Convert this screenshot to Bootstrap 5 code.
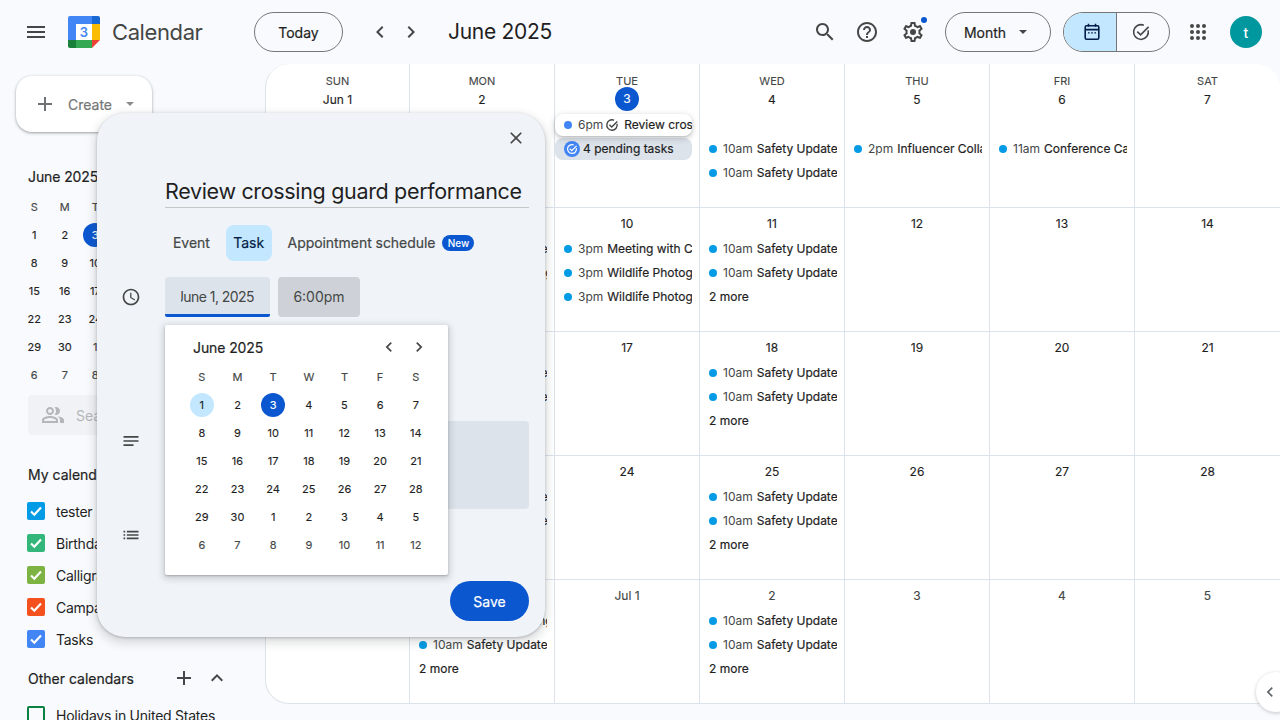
<!DOCTYPE html>
<html lang="en">
<head>
<meta charset="utf-8">
<title>Calendar</title>
<link href="https://cdn.jsdelivr.net/npm/bootstrap@5.3.0/dist/css/bootstrap.min.css" rel="stylesheet">
<style>
html,body{height:720px;overflow:hidden}
body{background:#f8fafd;font-family:Inter,"Noto Sans",sans-serif;color:#1f1f1f;font-size:14px}
svg{display:block;flex:none}
.app-shell{width:1280px;height:720px;position:relative;overflow:hidden}
.top-bar{height:64px}
.burger{margin-left:24px;width:24px;height:24px;fill:#444746}
.logo-mark{margin-left:20px}
.brand-name{margin-left:12px;width:142px;font-size:22px;color:#444746;line-height:28px;letter-spacing:-.4px}
.pill-btn{height:40px;border:1px solid #747775;border-radius:20px;background:transparent;color:#1f1f1f;font-size:14px;font-weight:400;-webkit-text-stroke:.2px;padding:0;display:flex;align-items:center;justify-content:center}
.today-btn{width:89px}
.nav-arrows{margin-left:25px;width:63px;gap:7px}
.nav-arrows svg{width:24px;height:24px;fill:#444746}
.period-name{margin-left:17px;font-size:21px;line-height:28px;letter-spacing:-.3px;width:365px;color:#1f1f1f}
.top-ico{width:24px;height:24px;fill:#444746}
.ico-help{margin-left:18px}
.gear-wrap{margin-left:22px;position:relative}
.gear-dot{position:absolute;left:20px;top:-3px;width:6px;height:6px;border-radius:50%;background:#0b57d0}
.month-btn{width:106px;margin-left:20px;gap:13px;padding-right:5px}
.caret-tri{width:0;height:0;border-left:4px solid transparent;border-right:4px solid transparent;border-top:4px solid #444746}
.seg-wrap{margin-left:12px;width:107px;height:40px;border:1px solid #747775;border-radius:20px;overflow:hidden}
.seg-on{width:53px;background:#c2e7ff;border-right:1px solid #747775;padding-left:4px}
.seg-off{flex:1;padding-right:4px}
.apps-ico{margin-left:16px}
.user-dot{margin-left:20px;width:32px;height:32px;border-radius:50%;background:#00979e;color:#fff;font-size:14px;font-weight:500}
.side-col{width:265px;flex:none;height:656px;overflow:hidden}
.create-btn{margin:12px 0 0 16px;width:136px;height:56px;border-radius:16px;background:#fff;box-shadow:0 1px 3px 1px rgba(60,64,67,.15),0 1px 2px rgba(60,64,67,.3);color:#747775;font-weight:400;font-size:14px;-webkit-text-stroke:.2px;padding:0 0 0 16px}
.create-btn svg{width:24px;height:24px;fill:#6f7275}
.create-lbl{margin-left:11px}
.create-tri{margin-left:14px;border-top-color:#8a8d8f}
.mini-title{margin:35px 0 0 28px;font-size:14px;font-weight:400;-webkit-text-stroke:.2px;line-height:20px;letter-spacing:-.1px}
.mini-grid{margin:6px 0 0 19px;display:grid;grid-template-columns:repeat(7,30.5px);grid-auto-rows:28px;text-align:center;font-size:11px;font-weight:400;-webkit-text-stroke:.15px;line-height:28px}
.mini-grid .wk{color:#444746}
.mini-grid .dim{color:#444746}
.day-now{position:relative;z-index:0;color:#fff}
.day-now::before{content:"";position:absolute;z-index:-1;left:50%;top:2px;width:24px;height:24px;margin-left:-12px;border-radius:50%;background:#0b57d0}
.people-box{margin:6px 0 0 28px;width:220px;height:40px;border-radius:4px;background:#f0f2f5;color:#b4b7ba;padding-left:13px;gap:11px}
.people-box svg{width:24px;height:24px;fill:#b4b7ba}
.group-title{margin:30px 0 0 28px;font-weight:400;-webkit-text-stroke:.2px;line-height:20px;color:#1f1f1f}
.cal-list{margin-top:10px}
.cal-row{height:32px;padding-left:27px;gap:11px;color:#1f1f1f;letter-spacing:-.25px;white-space:nowrap}
.tick-box{width:18px;height:18px;border-radius:2px;flex:none}
.tick-box svg{width:18px;height:18px;fill:none;stroke:#fff;stroke-width:2.2}
.c-tester{background:#039be5}.c-birth{background:#33b679}.c-calli{background:#7cb342}.c-camp{background:#f4511e}.c-tasks{background:#4285f4}
.c-hol{border:2px solid #0b8043}
.other-head{margin:13px 0 11px 28px;height:20px;width:201px}
.other-head svg{width:24px;height:24px;fill:#444746}
.other-head .txt{font-weight:400;-webkit-text-stroke:.2px;flex:1}
.other-head .add{margin-right:9px}
.month-wrap{flex:1;height:640px;background:#fff;border-radius:24px 24px 0 24px;border:1px solid #dde3ea;border-width:0 0 1px 1px;display:grid;grid-template-columns:144px repeat(6,145px);grid-template-rows:144px repeat(4,124px);overflow:hidden}
.cell{border-right:1px solid #dde3ea;border-bottom:1px solid #dde3ea;position:relative;min-width:0}
.cell.last-col{border-right:0}
.cell.last-row{border-bottom:0}
.cell-head{text-align:center;padding-top:8px}
.wk-name{font-size:11px;font-weight:400;-webkit-text-stroke:.1px;line-height:18px;color:#444746}
.dnum{font-size:12px;font-weight:400;-webkit-text-stroke:.15px;line-height:20px;color:#1f1f1f;text-align:center}
.dnum.soft{color:#444746}
.cell-date{padding-top:6px}
.slot-list{margin-top:3px}
.head-list{margin-top:27px}
.chip-list{margin-top:3px}
.today-num{width:24px;height:24px;margin:-3px auto 0;border-radius:50%;background:#0b57d0;color:#fff;line-height:24px}
.ev{width:137px;height:24px;padding-left:9px;font-size:12px;line-height:24px;overflow:hidden;white-space:nowrap;border-radius:8px;text-align:left}
.ev-dot{width:8px;height:8px;border-radius:50%;background:#039be5;flex:none;margin-right:6px}
.ev-time{color:#444746;margin-right:4px}
.ev-name{font-weight:400;-webkit-text-stroke:.2px;color:#1f1f1f}
.more-row{font-weight:400;-webkit-text-stroke:.2px;color:#1f1f1f}
.ev-lift{height:22px;margin:1px 0 2px;background:#fff;box-shadow:0 2px 6px rgba(60,64,67,.3),0 1px 2px rgba(60,64,67,.15);position:relative;z-index:1}
.ev-lift .ev-dot{background:#4285f4}
.ev-lift .ev-time{margin-right:2px}
.ev-lift svg{margin-right:5px}
.ev-pend{height:22px;background:#dde3ea;font-weight:400;-webkit-text-stroke:.2px;color:#1f1f1f}
.pend-ico{width:16px;height:16px;border-radius:50%;background:#4285f4;margin-right:3px}
.slide-tab{position:absolute;left:1256px;top:672px;width:40px;height:40px;border-radius:50%;background:#fff;box-shadow:0 1px 3px 1px rgba(60,64,67,.18);padding-left:4px}
.slide-tab svg{width:20px;height:20px;fill:#5f6368}
.pop-card{position:absolute;left:97px;top:113px;width:448px;height:524px;background:#f0f4f9;border-radius:28px;box-shadow:0 4px 8px 3px rgba(60,64,67,.15),0 1px 3px rgba(60,64,67,.3);z-index:5}
.pop-top{height:64px;padding:15px 19px 0 0}
.pop-top svg{width:20px;height:20px;fill:#444746}
.pop-line{padding-right:16px}
.pop-gut{width:68px;flex:none}
.pop-gut svg{width:20px;height:20px;fill:#444746}
.pop-main{flex:1;min-width:0}
.title-field{height:31px;border-bottom:1px solid #c4c7c5;font-size:21.5px;line-height:28px;color:#1f1f1f;white-space:nowrap;letter-spacing:-.33px}
.type-tabs{margin-top:17px;height:36px}
.type-tab{height:36px;padding:0 8px;border-radius:8px;font-weight:400;-webkit-text-stroke:.2px;color:#444746;line-height:36px;letter-spacing:-.05px}
.type-tab.type-on{background:#c2e7ff;color:#041e49;margin:0 8px;padding:0 7.5px}
.new-tag{height:16px;width:32px;margin-left:-1px;border-radius:8px;background:#0b57d0;color:#fff;font-size:10px;font-weight:500;line-height:16px;text-align:center}
.when-line{margin-top:16px}
.date-field{width:105px;height:40px;background:#dde3ea;border-bottom:3px solid #0b57d0;padding:0 16px;line-height:39px;color:#444746;margin-right:8px;border-radius:4px 4px 2px 2px;letter-spacing:-.55px}
.date-clip{overflow:hidden;white-space:nowrap;justify-content:flex-end}
.time-field{width:82px;height:40px;background:#ced2d8;border-radius:4px;text-align:center;line-height:40px;color:#444746}
.desc-line{margin-top:104px}
.desc-gut{padding-top:10px}
.desc-box{height:88px;background:#dde3ea;border-radius:4px}
.list-line{margin-top:14px;height:24px}
.pop-actions{margin-top:34px;padding-right:16px}
.save-btn{width:79px;height:40px;border-radius:20px;background:#0b57d0;color:#fff;font-size:14px;font-weight:400;-webkit-text-stroke:.2px;padding:0;border:0}
.save-btn:hover{background:#0b57d0;color:#fff}
.picker-card{position:absolute;left:68px;top:212px;width:283px;height:250px;background:#fff;border-radius:2px;box-shadow:0 2px 6px 2px rgba(60,64,67,.2),0 1px 2px rgba(60,64,67,.3);z-index:6}
.picker-head{height:38px;padding:6px 19px 0 28px}
.picker-name{flex:1;font-weight:400;-webkit-text-stroke:.2px;font-size:14px;letter-spacing:-.1px;color:#1f1f1f}
.picker-head svg{width:20px;height:20px;fill:#444746}
.picker-head .gap-arrow{margin-right:10px}
.picker-grid{margin-left:19px;display:grid;grid-template-columns:repeat(7,35.67px);grid-auto-rows:28px;text-align:center;font-size:11px;font-weight:400;-webkit-text-stroke:.15px;line-height:28px;color:#1f1f1f}
.picker-grid .wk,.picker-grid .dim{color:#444746}
.day-pick{position:relative;z-index:0}
.day-pick::before{content:"";position:absolute;z-index:-1;left:50%;top:2px;width:24px;height:24px;margin-left:-12px;border-radius:50%;background:#c2e7ff}
</style>
</head>
<body>
<div class="app-shell">
  <header class="top-bar d-flex align-items-center">
    <svg class="burger" viewBox="0 0 24 24"><path d="M3 18h18v-2H3v2zm0-5h18v-2H3v2zm0-7v2h18V6H3z"/></svg>
    <svg class="logo-mark" width="32" height="32" viewBox="0 0 32 32">
      <path d="M2 0h22v8H8v16H0V2a2 2 0 0 1 2-2z" fill="#4285f4"/>
      <path d="M24 0h6a2 2 0 0 1 2 2v6h-8z" fill="#1967d2"/>
      <rect x="24" y="8" width="8" height="16" fill="#fbbc04"/>
      <rect x="8" y="24" width="16" height="8" fill="#34a853"/>
      <path d="M0 24h8v8H2a2 2 0 0 1-2-2z" fill="#188038"/>
      <path d="M24 24h8l-8 8z" fill="#ea4335"/>
      <rect x="8" y="8" width="16" height="16" fill="#fff"/>
      <text x="16" y="21" text-anchor="middle" font-family="Inter,sans-serif" font-size="13" font-weight="600" fill="#4285f4">3</text>
    </svg>
    <div class="brand-name">Calendar</div>
    <button class="btn pill-btn today-btn">Today</button>
    <div class="nav-arrows d-flex">
      <svg viewBox="0 0 24 24"><path d="M15.41 7.41 14 6l-6 6 6 6 1.41-1.41L10.83 12z"/></svg>
      <svg viewBox="0 0 24 24"><path d="M10 6 8.59 7.41 13.17 12l-4.58 4.59L10 18l6-6z"/></svg>
    </div>
    <div class="period-name">June 2025</div>
    <svg class="top-ico" viewBox="0 0 24 24"><path d="M15.5 14h-.79l-.28-.27C15.41 12.59 16 11.11 16 9.5 16 5.91 13.09 3 9.5 3S3 5.91 3 9.5 5.91 16 9.5 16c1.61 0 3.09-.59 4.23-1.57l.27.28v.79l5 4.99L20.49 19l-4.99-5zm-6 0C7.01 14 5 11.99 5 9.5S7.01 5 9.5 5 14 7.01 14 9.5 11.99 14 9.5 14z"/></svg>
    <svg class="top-ico ico-help" viewBox="0 0 24 24"><path d="M11 18h2v-2h-2v2zm1-16C6.48 2 2 6.48 2 12s4.48 10 10 10 10-4.48 10-10S17.52 2 12 2zm0 18c-4.41 0-8-3.59-8-8s3.59-8 8-8 8 3.59 8 8-3.59 8-8 8zm0-14c-2.21 0-4 1.79-4 4h2c0-1.1.9-2 2-2s2 .9 2 2c0 2-3 1.75-3 5h2c0-2.25 3-2.5 3-5 0-2.21-1.79-4-4-4z"/></svg>
    <div class="gear-wrap">
      <svg class="top-ico" viewBox="0 0 24 24"><path d="M19.43 12.98c.04-.32.07-.64.07-.98 0-.34-.03-.66-.07-.98l2.11-1.65c.19-.15.24-.42.12-.64l-2-3.46c-.09-.16-.26-.25-.44-.25-.06 0-.12.01-.17.03l-2.49 1c-.52-.4-1.08-.73-1.69-.98l-.38-2.65C14.46 2.18 14.25 2 14 2h-4c-.25 0-.46.18-.49.42l-.38 2.65c-.61.25-1.17.59-1.69.98l-2.49-1c-.06-.02-.12-.03-.18-.03-.17 0-.34.09-.43.25l-2 3.46c-.13.22-.07.49.12.64l2.11 1.65c-.04.32-.07.65-.07.98 0 .33.03.66.07.98l-2.11 1.65c-.19.15-.24.42-.12.64l2 3.46c.09.16.26.25.44.25.06 0 .12-.01.17-.03l2.49-1c.52.4 1.08.73 1.69.98l.38 2.65c.03.24.24.42.49.42h4c.25 0 .46-.18.49-.42l.38-2.65c.61-.25 1.17-.59 1.69-.98l2.49 1c.06.02.12.03.18.03.17 0 .34-.09.43-.25l2-3.46c.12-.22.07-.49-.12-.64l-2.11-1.65zm-1.98-1.71c.04.31.05.52.05.73 0 .21-.02.43-.05.73l-.14 1.13.89.7 1.08.84-.7 1.21-1.27-.51-1.04-.42-.9.68c-.43.32-.84.56-1.25.73l-1.06.43-.16 1.13-.2 1.35h-1.4l-.19-1.35-.16-1.13-1.06-.43c-.43-.18-.83-.41-1.23-.71l-.91-.7-1.06.43-1.27.51-.7-1.21 1.08-.84.89-.7-.14-1.13c-.03-.31-.05-.54-.05-.74s.02-.43.05-.73l.14-1.13-.89-.7-1.08-.84.7-1.21 1.27.51 1.04.42.9-.68c.43-.32.84-.56 1.25-.73l1.06-.43.16-1.13.2-1.35h1.39l.19 1.35.16 1.13 1.06.43c.43.18.83.41 1.23.71l.91.7 1.06-.43 1.27-.51.7 1.21-1.07.85-.89.7.14 1.13zM12 9a3 3 0 1 0 0 6 3 3 0 0 0 0-6z"/></svg>
      <span class="gear-dot"></span>
    </div>
    <button class="btn pill-btn month-btn">Month <span class="caret-tri"></span></button>
    <div class="seg-wrap d-flex">
      <div class="seg-on d-flex align-items-center justify-content-center">
        <svg width="20" height="20" viewBox="0 0 20 20" fill="none" stroke="#041e49" stroke-width="1.6"><rect x="3.2" y="3.8" width="13.6" height="13.4" rx="1.4"/><path d="M3.2 7.6h13.6M6.5 1.8v3M13.5 1.8v3"/><path d="M6 10.8h1.6M9.2 10.8h1.6M12.4 10.8H14" stroke-width="1.2"/></svg>
      </div>
      <div class="seg-off d-flex align-items-center justify-content-center">
        <svg width="20" height="20" viewBox="0 0 20 20" fill="none" stroke="#444746" stroke-width="1.6"><path d="M17.2 8.4A7.4 7.4 0 1 1 12.8 3.2"/><path d="M6.3 9.6l3.3 3.3 8-8"/></svg>
      </div>
    </div>
    <svg class="apps-ico" width="24" height="24" viewBox="0 0 24 24" fill="#444746"><circle cx="6" cy="6" r="2"/><circle cx="12" cy="6" r="2"/><circle cx="18" cy="6" r="2"/><circle cx="6" cy="12" r="2"/><circle cx="12" cy="12" r="2"/><circle cx="18" cy="12" r="2"/><circle cx="6" cy="18" r="2"/><circle cx="12" cy="18" r="2"/><circle cx="18" cy="18" r="2"/></svg>
    <div class="user-dot d-flex align-items-center justify-content-center">t</div>
  </header>

  <div class="d-flex">
    <aside class="side-col">
      <button class="btn create-btn d-flex align-items-center">
        <svg viewBox="0 0 24 24"><path d="M19 13h-6v6h-2v-6H5v-2h6V5h2v6h6v2z"/></svg>
        <span class="create-lbl">Create</span><span class="caret-tri create-tri"></span>
      </button>
      <div class="mini-title">June 2025</div>
      <div class="mini-grid">
        <div class="wk">S</div><div class="wk">M</div><div class="wk">T</div><div class="wk">W</div><div class="wk">T</div><div class="wk">F</div><div class="wk">S</div>
        <div>1</div><div>2</div><div class="day-now">3</div><div>4</div><div>5</div><div>6</div><div>7</div>
        <div>8</div><div>9</div><div>10</div><div>11</div><div>12</div><div>13</div><div>14</div>
        <div>15</div><div>16</div><div>17</div><div>18</div><div>19</div><div>20</div><div>21</div>
        <div>22</div><div>23</div><div>24</div><div>25</div><div>26</div><div>27</div><div>28</div>
        <div>29</div><div>30</div><div class="dim">1</div><div class="dim">2</div><div class="dim">3</div><div class="dim">4</div><div class="dim">5</div>
        <div class="dim">6</div><div class="dim">7</div><div class="dim">8</div><div class="dim">9</div><div class="dim">10</div><div class="dim">11</div><div class="dim">12</div>
      </div>
      <div class="people-box d-flex align-items-center">
        <svg viewBox="0 0 24 24"><path d="M16.67 13.13C18.04 14.06 19 15.32 19 17v3h4v-3c0-2.18-3.57-3.47-6.33-3.87zM15 12c2.21 0 4-1.79 4-4s-1.79-4-4-4c-.47 0-.91.1-1.33.24C14.5 5.27 15 6.58 15 8s-.5 2.73-1.33 3.76c.42.14.86.24 1.33.24zM9 12c2.21 0 4-1.79 4-4s-1.79-4-4-4-4 1.79-4 4 1.79 4 4 4zm0-6c1.1 0 2 .9 2 2s-.9 2-2 2-2-.9-2-2 .9-2 2-2zM9 13c-2.67 0-8 1.34-8 4v3h16v-3c0-2.66-5.33-4-8-4zm6 5H3v-.99C3.2 16.29 6.3 15 9 15s5.8 1.29 6 2z"/></svg>
        <span>Search for people</span>
      </div>
      <div class="group-title">My calendars</div>
      <div class="cal-list">
        <div class="cal-row d-flex align-items-center"><span class="tick-box c-tester"><svg viewBox="0 0 18 18"><path d="M4 9.5l3.3 3.2L14 5.5"/></svg></span>tester</div>
        <div class="cal-row d-flex align-items-center"><span class="tick-box c-birth"><svg viewBox="0 0 18 18"><path d="M4 9.5l3.3 3.2L14 5.5"/></svg></span>Birthdays</div>
        <div class="cal-row d-flex align-items-center"><span class="tick-box c-calli"><svg viewBox="0 0 18 18"><path d="M4 9.5l3.3 3.2L14 5.5"/></svg></span>Calligraphy</div>
        <div class="cal-row d-flex align-items-center"><span class="tick-box c-camp"><svg viewBox="0 0 18 18"><path d="M4 9.5l3.3 3.2L14 5.5"/></svg></span>Campaign</div>
        <div class="cal-row d-flex align-items-center"><span class="tick-box c-tasks"><svg viewBox="0 0 18 18"><path d="M4 9.5l3.3 3.2L14 5.5"/></svg></span>Tasks</div>
      </div>
      <div class="other-head d-flex align-items-center">
        <span class="txt">Other calendars</span>
        <svg class="add" viewBox="0 0 24 24"><path d="M19 13h-6v6h-2v-6H5v-2h6V5h2v6h6v2z"/></svg>
        <svg viewBox="0 0 24 24"><path d="M12 8l-6 6 1.41 1.41L12 10.83l4.59 4.58L18 14z"/></svg>
      </div>
      <div class="cal-row d-flex align-items-center"><span class="tick-box c-hol"></span>Holidays in United States</div>
    </aside>

    <main class="month-wrap">
      <div class="cell cell-head"><div class="wk-name">SUN</div><div class="dnum">Jun 1</div></div>
      <div class="cell cell-head"><div class="wk-name">MON</div><div class="dnum">2</div></div>
      <div class="cell cell-head"><div class="wk-name">TUE</div><div class="dnum today-num">3</div>
        <div class="chip-list">
          <div class="ev ev-lift d-flex align-items-center"><span class="ev-dot"></span><span class="ev-time">6pm</span><svg width="14" height="14" viewBox="0 0 20 20" fill="none" stroke="#444746" stroke-width="2"><path d="M17.2 8.4A7.4 7.4 0 1 1 12.8 3.2"/><path d="M6.3 9.6l3.3 3.3 8-8"/></svg><span class="ev-name">Review crossing guard performance</span></div>
          <div class="ev ev-pend d-flex align-items-center"><span class="pend-ico d-flex align-items-center justify-content-center"><svg width="12" height="12" viewBox="0 0 20 20" fill="none" stroke="#fff" stroke-width="2"><path d="M17.2 8.4A7.4 7.4 0 1 1 12.8 3.2"/><path d="M6.3 9.6l3.3 3.3 8-8"/></svg></span>4 pending tasks</div>
        </div>
      </div>
      <div class="cell cell-head"><div class="wk-name">WED</div><div class="dnum">4</div>
        <div class="head-list">
          <div class="ev d-flex align-items-center"><span class="ev-dot"></span><span class="ev-time">10am</span><span class="ev-name">Safety Update</span></div>
          <div class="ev d-flex align-items-center"><span class="ev-dot"></span><span class="ev-time">10am</span><span class="ev-name">Safety Update</span></div>
        </div>
      </div>
      <div class="cell cell-head"><div class="wk-name">THU</div><div class="dnum">5</div>
        <div class="head-list">
          <div class="ev d-flex align-items-center"><span class="ev-dot"></span><span class="ev-time">2pm</span><span class="ev-name">Influencer Collab</span></div>
        </div>
      </div>
      <div class="cell cell-head"><div class="wk-name">FRI</div><div class="dnum">6</div>
        <div class="head-list">
          <div class="ev d-flex align-items-center"><span class="ev-dot"></span><span class="ev-time">11am</span><span class="ev-name">Conference Call</span></div>
        </div>
      </div>
      <div class="cell cell-head last-col"><div class="wk-name">SAT</div><div class="dnum">7</div></div>

      <div class="cell cell-date"><div class="dnum">8</div></div>
      <div class="cell cell-date"><div class="dnum">9</div><div class="slot-list">
        <div class="ev d-flex align-items-center"><span class="ev-dot"></span><span class="ev-time">10am</span><span class="ev-name">Safety Update</span></div>
        <div class="ev d-flex align-items-center"><span class="ev-dot"></span><span class="ev-time">10am</span><span class="ev-name">Safety Meeting</span></div>
      </div></div>
      <div class="cell cell-date"><div class="dnum">10</div><div class="slot-list">
        <div class="ev d-flex align-items-center"><span class="ev-dot"></span><span class="ev-time">3pm</span><span class="ev-name">Meeting with Client</span></div>
        <div class="ev d-flex align-items-center"><span class="ev-dot"></span><span class="ev-time">3pm</span><span class="ev-name">Wildlife Photography</span></div>
        <div class="ev d-flex align-items-center"><span class="ev-dot"></span><span class="ev-time">3pm</span><span class="ev-name">Wildlife Photography</span></div>
      </div></div>
      <div class="cell cell-date"><div class="dnum">11</div><div class="slot-list">
        <div class="ev d-flex align-items-center"><span class="ev-dot"></span><span class="ev-time">10am</span><span class="ev-name">Safety Update</span></div>
        <div class="ev d-flex align-items-center"><span class="ev-dot"></span><span class="ev-time">10am</span><span class="ev-name">Safety Update</span></div>
        <div class="ev more-row">2 more</div>
      </div></div>
      <div class="cell cell-date"><div class="dnum">12</div></div>
      <div class="cell cell-date"><div class="dnum">13</div></div>
      <div class="cell cell-date last-col"><div class="dnum">14</div></div>

      <div class="cell cell-date"><div class="dnum">15</div></div>
      <div class="cell cell-date"><div class="dnum">16</div><div class="slot-list">
        <div class="ev d-flex align-items-center"><span class="ev-dot"></span><span class="ev-time">10am</span><span class="ev-name">Safety Update</span></div>
        <div class="ev d-flex align-items-center"><span class="ev-dot"></span><span class="ev-time">10am</span><span class="ev-name">Safety Update</span></div>
      </div></div>
      <div class="cell cell-date"><div class="dnum">17</div></div>
      <div class="cell cell-date"><div class="dnum">18</div><div class="slot-list">
        <div class="ev d-flex align-items-center"><span class="ev-dot"></span><span class="ev-time">10am</span><span class="ev-name">Safety Update</span></div>
        <div class="ev d-flex align-items-center"><span class="ev-dot"></span><span class="ev-time">10am</span><span class="ev-name">Safety Update</span></div>
        <div class="ev more-row">2 more</div>
      </div></div>
      <div class="cell cell-date"><div class="dnum">19</div></div>
      <div class="cell cell-date"><div class="dnum">20</div></div>
      <div class="cell cell-date last-col"><div class="dnum">21</div></div>

      <div class="cell cell-date"><div class="dnum">22</div></div>
      <div class="cell cell-date"><div class="dnum">23</div><div class="slot-list">
        <div class="ev d-flex align-items-center"><span class="ev-dot"></span><span class="ev-time">10am</span><span class="ev-name">Safety Update</span></div>
        <div class="ev d-flex align-items-center"><span class="ev-dot"></span><span class="ev-time">10am</span><span class="ev-name">Safety Update</span></div>
      </div></div>
      <div class="cell cell-date"><div class="dnum">24</div></div>
      <div class="cell cell-date"><div class="dnum">25</div><div class="slot-list">
        <div class="ev d-flex align-items-center"><span class="ev-dot"></span><span class="ev-time">10am</span><span class="ev-name">Safety Update</span></div>
        <div class="ev d-flex align-items-center"><span class="ev-dot"></span><span class="ev-time">10am</span><span class="ev-name">Safety Update</span></div>
        <div class="ev more-row">2 more</div>
      </div></div>
      <div class="cell cell-date"><div class="dnum">26</div></div>
      <div class="cell cell-date"><div class="dnum">27</div></div>
      <div class="cell cell-date last-col"><div class="dnum">28</div></div>

      <div class="cell cell-date last-row"><div class="dnum">29</div></div>
      <div class="cell cell-date last-row"><div class="dnum">30</div><div class="slot-list">
        <div class="ev d-flex align-items-center"><span class="ev-dot"></span><span class="ev-time">10am</span><span class="ev-name">Safety Meeting</span></div>
        <div class="ev d-flex align-items-center"><span class="ev-dot"></span><span class="ev-time">10am</span><span class="ev-name">Safety Update</span></div>
        <div class="ev more-row">2 more</div>
      </div></div>
      <div class="cell cell-date last-row"><div class="dnum soft">Jul 1</div></div>
      <div class="cell cell-date last-row"><div class="dnum soft">2</div><div class="slot-list">
        <div class="ev d-flex align-items-center"><span class="ev-dot"></span><span class="ev-time">10am</span><span class="ev-name">Safety Update</span></div>
        <div class="ev d-flex align-items-center"><span class="ev-dot"></span><span class="ev-time">10am</span><span class="ev-name">Safety Update</span></div>
        <div class="ev more-row">2 more</div>
      </div></div>
      <div class="cell cell-date last-row"><div class="dnum soft">3</div></div>
      <div class="cell cell-date last-row"><div class="dnum soft">4</div></div>
      <div class="cell cell-date last-row last-col"><div class="dnum soft">5</div></div>
    </main>
  </div>

  <div class="slide-tab d-flex align-items-center"><svg viewBox="0 0 24 24"><path d="M15.41 7.41 14 6l-6 6 6 6 1.41-1.41L10.83 12z"/></svg></div>

  <section class="pop-card">
    <div class="pop-top d-flex justify-content-end">
      <svg viewBox="0 0 24 24"><path d="M19 6.41 17.59 5 12 10.59 6.41 5 5 6.41 10.59 12 5 17.59 6.41 19 12 13.41 17.59 19 19 17.59 13.41 12z"/></svg>
    </div>
    <div class="pop-line d-flex"><div class="pop-gut"></div><div class="pop-main title-field">Review crossing guard performance</div></div>
    <div class="pop-line d-flex"><div class="pop-gut"></div><div class="pop-main type-tabs d-flex align-items-center">
      <div class="type-tab">Event</div><div class="type-tab type-on">Task</div><div class="type-tab">Appointment schedule</div><div class="new-tag">New</div>
    </div></div>
    <div class="pop-line when-line d-flex">
      <div class="pop-gut d-flex align-items-center justify-content-center"><svg viewBox="0 0 24 24"><path d="M11.99 2C6.47 2 2 6.48 2 12s4.47 10 9.99 10C17.52 22 22 17.52 22 12S17.52 2 11.99 2zM12 20c-4.42 0-8-3.58-8-8s3.58-8 8-8 8 3.58 8 8-3.58 8-8 8zm.5-13H11v6l5.25 3.15.75-1.23-4.5-2.67z"/></svg></div>
      <div class="pop-main d-flex"><div class="date-field"><div class="date-clip d-flex">June 1, 2025</div></div><div class="time-field">6:00pm</div></div>
    </div>
    <div class="pop-line desc-line d-flex">
      <div class="pop-gut desc-gut d-flex justify-content-center"><svg viewBox="0 0 24 24"><path d="M3 18h12v-2H3v2zM3 6v2h18V6H3zm0 7h18v-2H3v2z"/></svg></div>
      <div class="pop-main desc-box"></div>
    </div>
    <div class="pop-line list-line d-flex">
      <div class="pop-gut d-flex align-items-center justify-content-center"><svg viewBox="0 0 24 24"><path d="M3 13h2v-2H3v2zm0 4h2v-2H3v2zm0-8h2V7H3v2zm4 4h14v-2H7v2zm0 4h14v-2H7v2zM7 7v2h14V7H7z"/></svg></div>
    </div>
    <div class="pop-actions d-flex justify-content-end"><button class="btn save-btn">Save</button></div>

    <div class="picker-card">
      <div class="picker-head d-flex align-items-center">
        <div class="picker-name">June 2025</div>
        <svg class="gap-arrow" viewBox="0 0 24 24"><path d="M15.41 7.41 14 6l-6 6 6 6 1.41-1.41L10.83 12z"/></svg>
        <svg viewBox="0 0 24 24"><path d="M10 6 8.59 7.41 13.17 12l-4.58 4.59L10 18l6-6z"/></svg>
      </div>
      <div class="picker-grid">
        <div class="wk">S</div><div class="wk">M</div><div class="wk">T</div><div class="wk">W</div><div class="wk">T</div><div class="wk">F</div><div class="wk">S</div>
        <div class="day-pick">1</div><div>2</div><div class="day-now">3</div><div>4</div><div>5</div><div>6</div><div>7</div>
        <div>8</div><div>9</div><div>10</div><div>11</div><div>12</div><div>13</div><div>14</div>
        <div>15</div><div>16</div><div>17</div><div>18</div><div>19</div><div>20</div><div>21</div>
        <div>22</div><div>23</div><div>24</div><div>25</div><div>26</div><div>27</div><div>28</div>
        <div>29</div><div>30</div><div>1</div><div>2</div><div>3</div><div>4</div><div>5</div>
        <div class="dim">6</div><div class="dim">7</div><div class="dim">8</div><div class="dim">9</div><div class="dim">10</div><div class="dim">11</div><div class="dim">12</div>
      </div>
    </div>
  </section>
</div>
</body>
</html>
